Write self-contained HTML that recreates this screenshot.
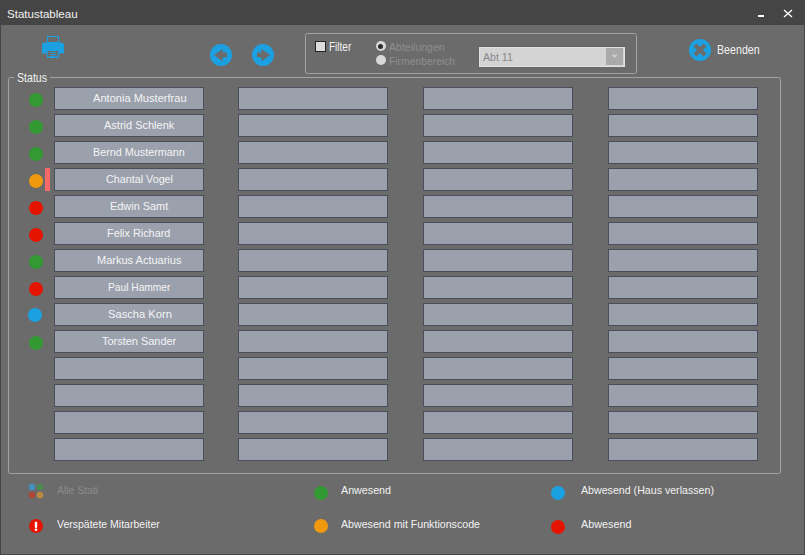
<!DOCTYPE html>
<html><head><meta charset="utf-8">
<style>
*{margin:0;padding:0;box-sizing:border-box}
html,body{width:805px;height:555px;overflow:hidden;background:#454545;font-family:"Liberation Sans",sans-serif}
.a{position:absolute}
.t{position:absolute;white-space:nowrap;line-height:1}
.btn{position:absolute;width:150px;height:23px;background:#9ba0ad;border:1px solid #4a4e5c}
.btn span{position:absolute;top:4px;transform-origin:0 0;color:#f4f4f4;font-size:11px;line-height:12px;white-space:nowrap}
.dot{position:absolute;width:14px;height:14px;border-radius:50%}
.g{background:#339933}.o{background:#f0990f}.r{background:#e51400}.b{background:#1ba1e2}
.grp{position:absolute;border:1px solid #a3a3a3;border-radius:2.5px}
.lt{position:absolute;white-space:nowrap;font-size:11.8px;line-height:11.8px;color:#f2f2f2;transform-origin:0 0}
</style></head><body>

<div class="lt" style="left:6.71px;top:8.72px;font-size:10.8px;line-height:10.8px;transform:scaleX(1.069);color:#f2f2f2">Statustableau</div>
<div class="a" style="left:758px;top:15px;width:6px;height:2px;background:#fff"></div>
<svg class="a" style="left:783px;top:9px" width="10" height="9" viewBox="0 0 10 9"><path d="M1 1L9 8M9 1L1 8" stroke="#fff" stroke-width="1.3"/></svg>
<div class="a" style="left:1px;top:25px;width:803px;height:529px;background:#6b6b6b"></div>

<!-- printer -->
<svg class="a" style="left:40px;top:34px" width="26" height="26" viewBox="0 0 26 26">
 <rect x="7.5" y="2.5" width="11" height="6" fill="none" stroke="#1ba1e2" stroke-width="1"/>
 <path d="M2 11 Q2 8.5 5 8.5 L21 8.5 Q24 8.5 24 11 L24 19.5 L2 19.5 Z" fill="#1ba1e2"/>
 <rect x="7" y="17" width="12" height="7" fill="#1ba1e2"/>
 <rect x="7" y="17" width="12" height="1" fill="#6b6b6b"/>
 <rect x="8" y="17.5" width="9.8" height="5.1" fill="#6b6b6b"/>
 <rect x="9.9" y="18.1" width="6.3" height="0.9" fill="#1ba1e2"/>
 <rect x="9.9" y="20" width="6.3" height="0.9" fill="#1ba1e2"/>
 <ellipse cx="12.9" cy="22.7" rx="2.4" ry="1" fill="#1ba1e2"/>
</svg>

<!-- nav arrows -->
<svg class="a" style="left:209px;top:43px" width="24" height="24" viewBox="0 0 24 24">
 <circle cx="12" cy="12" r="11" fill="#1ba1e2"/>
 <path d="M4.9 12 L13.7 5.9 L13.7 9.6 L17.9 9.6 L17.9 14.2 L13.7 14.2 L13.7 18.2 Z" fill="#6b6b6b"/>
</svg>
<svg class="a" style="left:251px;top:43px" width="24" height="24" viewBox="0 0 24 24">
 <circle cx="12" cy="12" r="11" fill="#1ba1e2"/>
 <path d="M19.2 12 L10.4 5.9 L10.4 9.6 L6 9.6 L6 14.2 L10.4 14.2 L10.4 18.2 Z" fill="#6b6b6b"/>
</svg>

<!-- filter group -->
<div class="grp" style="left:305px;top:33px;width:332px;height:41px"></div>
<div class="a" style="left:315px;top:41px;width:11px;height:11px;background:#dcdcdc;border:1px solid #262626"></div>
<div class="lt" style="left:329.4px;top:40.77px;font-size:12.5px;line-height:12.5px;transform:scaleX(0.8)">Filter</div>
<div class="a" style="left:375.5px;top:41px;width:10px;height:10px;border-radius:50%;background:#d8d8d8"></div>
<div class="a" style="left:378px;top:43.5px;width:5px;height:5px;border-radius:50%;background:#2a2a2a"></div>
<div class="a" style="left:375.5px;top:55px;width:10px;height:10px;border-radius:50%;background:#d8d8d8"></div>
<div class="lt" style="left:389.1px;top:41.97px;font-size:11.8px;line-height:11.8px;transform:scaleX(0.894);color:#8e8e8e">Abteilungen</div>
<div class="lt" style="left:388.72px;top:55.77px;font-size:11.8px;line-height:11.8px;transform:scaleX(0.877);color:#8e8e8e">Firmenbereich</div>
<div class="a" style="left:479px;top:47px;width:146px;height:20px;background:#d4d4d4;border:1px solid #e2e2e2;box-shadow:0 -1px 0 #626262,-1px 0 0 #646464"></div>
<div class="a" style="left:606px;top:48px;width:17px;height:17px;background:#aaaaaa"></div>
<svg class="a" style="left:611px;top:54px" width="7" height="5" viewBox="0 0 7 5"><path d="M0.5 0.8H6.5L3.5 4Z" fill="#d0d0d0"/></svg>
<div class="lt" style="left:482.8px;top:51.7px;font-size:11.8px;line-height:11.8px;transform:scaleX(0.898);color:#888888">Abt 11</div>

<!-- Beenden -->
<svg class="a" style="left:688px;top:38px" width="24" height="24" viewBox="0 0 24 24">
 <circle cx="12" cy="12" r="11" fill="#1ba1e2"/>
 <path d="M7 7L17 17M17 7L7 17" stroke="#6b6b6b" stroke-width="4"/>
</svg>
<div class="lt" style="left:716.69px;top:43.86px;font-size:12.4px;line-height:12.4px;transform:scaleX(0.86)">Beenden</div>

<!-- status group -->
<div class="grp" style="left:8px;top:77px;width:773px;height:397px"></div>
<div class="a" style="left:14px;top:72px;width:36px;height:10px;background:#6b6b6b"></div>
<div class="lt" style="left:17.26px;top:72.19000000000001px;font-size:12.6px;line-height:12.6px;transform:scaleX(0.841)">Status</div>

<div class="btn" style="left:54px;top:87px"><span style="left:38.1px;transform:scaleX(1.007)">Antonia Musterfrau</span></div>
<div class="btn" style="left:238px;top:87px"></div>
<div class="btn" style="left:423px;top:87px"></div>
<div class="btn" style="left:608px;top:87px"></div>
<div class="dot g" style="left:29px;top:93px"></div>
<div class="btn" style="left:54px;top:114px"><span style="left:48.9px;transform:scaleX(0.999)">Astrid Schlenk</span></div>
<div class="btn" style="left:238px;top:114px"></div>
<div class="btn" style="left:423px;top:114px"></div>
<div class="btn" style="left:608px;top:114px"></div>
<div class="dot g" style="left:29px;top:120px"></div>
<div class="btn" style="left:54px;top:141px"><span style="left:38.49px;transform:scaleX(0.982)">Bernd Mustermann</span></div>
<div class="btn" style="left:238px;top:141px"></div>
<div class="btn" style="left:423px;top:141px"></div>
<div class="btn" style="left:608px;top:141px"></div>
<div class="dot g" style="left:29px;top:147px"></div>
<div class="btn" style="left:54px;top:168px"><span style="left:50.96px;transform:scaleX(0.978)">Chantal Vogel</span></div>
<div class="btn" style="left:238px;top:168px"></div>
<div class="btn" style="left:423px;top:168px"></div>
<div class="btn" style="left:608px;top:168px"></div>
<div class="dot o" style="left:29px;top:174px"></div>
<div class="btn" style="left:54px;top:195px"><span style="left:55.18px;transform:scaleX(0.992)">Edwin Samt</span></div>
<div class="btn" style="left:238px;top:195px"></div>
<div class="btn" style="left:423px;top:195px"></div>
<div class="btn" style="left:608px;top:195px"></div>
<div class="dot r" style="left:29px;top:201px"></div>
<div class="btn" style="left:54px;top:222px"><span style="left:52.49px;transform:scaleX(0.987)">Felix Richard</span></div>
<div class="btn" style="left:238px;top:222px"></div>
<div class="btn" style="left:423px;top:222px"></div>
<div class="btn" style="left:608px;top:222px"></div>
<div class="dot r" style="left:29px;top:228px"></div>
<div class="btn" style="left:54px;top:249px"><span style="left:41.77px;transform:scaleX(1.001)">Markus Actuarius</span></div>
<div class="btn" style="left:238px;top:249px"></div>
<div class="btn" style="left:423px;top:249px"></div>
<div class="btn" style="left:608px;top:249px"></div>
<div class="dot g" style="left:29px;top:255px"></div>
<div class="btn" style="left:54px;top:276px"><span style="left:52.53px;transform:scaleX(0.928)">Paul Hammer</span></div>
<div class="btn" style="left:238px;top:276px"></div>
<div class="btn" style="left:423px;top:276px"></div>
<div class="btn" style="left:608px;top:276px"></div>
<div class="dot r" style="left:29px;top:282px"></div>
<div class="btn" style="left:54px;top:303px"><span style="left:52.74px;transform:scaleX(1.015)">Sascha Korn</span></div>
<div class="btn" style="left:238px;top:303px"></div>
<div class="btn" style="left:423px;top:303px"></div>
<div class="btn" style="left:608px;top:303px"></div>
<div class="dot b" style="left:28px;top:308px"></div>
<div class="btn" style="left:54px;top:330px"><span style="left:46.73px;transform:scaleX(0.995)">Torsten Sander</span></div>
<div class="btn" style="left:238px;top:330px"></div>
<div class="btn" style="left:423px;top:330px"></div>
<div class="btn" style="left:608px;top:330px"></div>
<div class="dot g" style="left:29px;top:336px"></div>
<div class="btn" style="left:54px;top:357px"></div>
<div class="btn" style="left:238px;top:357px"></div>
<div class="btn" style="left:423px;top:357px"></div>
<div class="btn" style="left:608px;top:357px"></div>
<div class="btn" style="left:54px;top:384px"></div>
<div class="btn" style="left:238px;top:384px"></div>
<div class="btn" style="left:423px;top:384px"></div>
<div class="btn" style="left:608px;top:384px"></div>
<div class="btn" style="left:54px;top:411px"></div>
<div class="btn" style="left:238px;top:411px"></div>
<div class="btn" style="left:423px;top:411px"></div>
<div class="btn" style="left:608px;top:411px"></div>
<div class="btn" style="left:54px;top:438px"></div>
<div class="btn" style="left:238px;top:438px"></div>
<div class="btn" style="left:423px;top:438px"></div>
<div class="btn" style="left:608px;top:438px"></div>
<div class="a" style="left:45px;top:168px;width:5px;height:23px;background:#f86a6a"></div>

<svg class="a" style="left:28px;top:483px" width="16" height="16" viewBox="0 0 16 16">
 <circle cx="4" cy="4" r="3.35" fill="#4790bd"/>
 <circle cx="12" cy="4" r="3.35" fill="#4f8b50"/>
 <circle cx="4" cy="12" r="3.35" fill="#ae463b"/>
 <circle cx="12" cy="12" r="3.35" fill="#b98a3f"/>
</svg>
<div class="lt" style="left:57.0px;top:484.77px;font-size:11.8px;line-height:11.8px;transform:scaleX(0.884);color:#8c8c8c">Alle Stati</div>
<svg class="a" style="left:29px;top:519px" width="14" height="14" viewBox="0 0 14 14">
 <circle cx="7" cy="7" r="7" fill="#e51400"/>
 <rect x="5.8" y="2.8" width="2.4" height="6" fill="#fff"/>
 <rect x="5.8" y="9.6" width="2.4" height="2.2" fill="#fff"/>
</svg>
<div class="lt" style="left:57.0px;top:518.77px;font-size:11.8px;line-height:11.8px;transform:scaleX(0.89)">Verspätete Mitarbeiter</div>
<div class="dot g" style="left:314px;top:486px"></div>
<div class="lt" style="left:341.2px;top:484.77px;font-size:11.8px;line-height:11.8px;transform:scaleX(0.908)">Anwesend</div>
<div class="dot o" style="left:314px;top:519px"></div>
<div class="lt" style="left:340.8px;top:518.67px;font-size:11.8px;line-height:11.8px;transform:scaleX(0.902)">Abwesend mit Funktionscode</div>
<div class="dot b" style="left:551px;top:486px"></div>
<div class="lt" style="left:580.9px;top:484.77px;font-size:11.8px;line-height:11.8px;transform:scaleX(0.901)">Abwesend (Haus verlassen)</div>
<div class="dot r" style="left:551px;top:520px"></div>
<div class="lt" style="left:580.9px;top:518.67px;font-size:11.8px;line-height:11.8px;transform:scaleX(0.916)">Abwesend</div>

</body></html>
